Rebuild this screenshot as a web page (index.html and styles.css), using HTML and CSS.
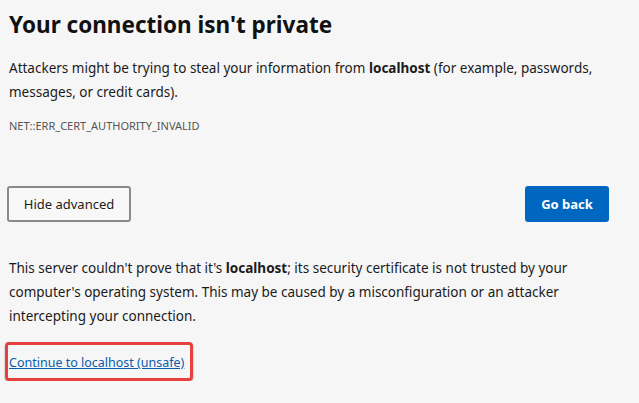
FILE: index.html
```html
<!DOCTYPE html>
<html lang="en">
<head>
<meta charset="utf-8">
<title>Privacy error</title>
<link rel="stylesheet" href="styles.css">
</head>
<body>
<main class="page">
  <h1 class="title">Your connection isn't private</h1>
  <p class="text">Attackers might be trying to steal your information from <strong>localhost</strong> (for example, passwords, messages, or credit cards).</p>
  <p class="code">NET::ERR_CERT_AUTHORITY_INVALID</p>
  <div class="actions">
    <button class="btn btn-secondary">Hide advanced</button>
    <button class="btn btn-primary">Go back</button>
  </div>
  <p class="text details">This server couldn't prove that it's <strong>localhost</strong>; its security certificate is not trusted by your computer's operating system. This may be caused by a misconfiguration or an attacker intercepting your connection.</p>
  <div class="proceed">
    <span class="highlight"><a class="link" href="#">Continue to localhost (unsafe)</a></span>
  </div>
</main>
</body>
</html>
```
FILE: styles.css
```css
html, body {
  margin: 0;
  padding: 0;
  background: #f6f6f6;
}
body {
  font-family: "Noto Sans", "Open Sans", sans-serif;
  color: #1b1b1b;
}
.page {
  width: 600px;
  padding: 9px 0 0 9px;
}
.title {
  margin: 0;
  font-size: 22.5px;
  line-height: 32px;
  font-weight: 700;
  color: #111;
}
.text {
  margin: 15px 0 0;
  font-size: 13.5px;
  line-height: 24px;
}
.text strong { font-weight: 700; }
.code {
  margin: 14px 0 0;
  font-size: 11px;
  line-height: 16px;
  color: #555;
}
.actions {
  margin-top: 52px;
  display: flex;
  justify-content: space-between;
  align-items: center;
  margin-left: -2px;
}
.btn {
  font-family: inherit;
  height: 36px;
  border-radius: 3px;
  font-size: 13px;
  cursor: pointer;
}
.btn-secondary {
  width: 124px;
  background: #f8f8f8;
  border: 2px solid #8a8a8a;
  color: #1b1b1b;
}
.btn-primary {
  width: 84px;
  background: #0067c0;
  border: none;
  color: #fff;
  font-weight: 700;
}
.text.details {
  margin-top: 34px;
}
.proceed {
  margin-top: 14px;
  margin-left: -4px;
}
.highlight {
  display: inline-block;
  border: 3px solid #e8403f;
  border-radius: 4px;
  padding: 5px 6px 6px 1px;
  box-shadow: 0 1px 2px rgba(0,0,0,0.35);
}
.link {
  font-size: 12.5px;
  line-height: 18px;
  color: #0b5cad;
  text-decoration: underline;
}
```
